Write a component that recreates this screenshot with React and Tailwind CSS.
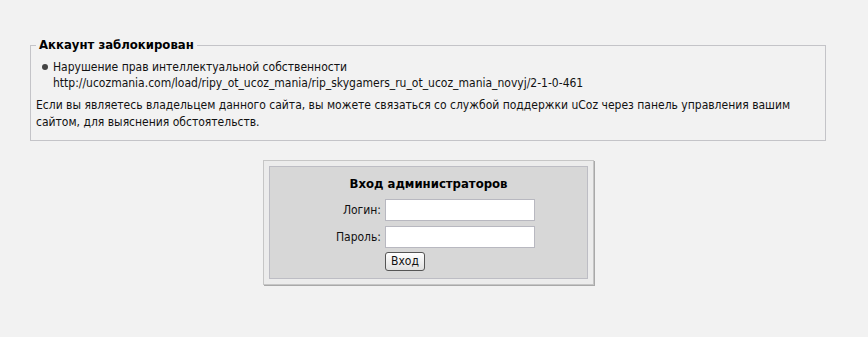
export default function App() {
  return (
    <div
      className="min-h-[337px] bg-[#f2f2f2] text-[12px] text-[#111] pt-[37px]"
      style={{ fontFamily: 'Tahoma, "DejaVu Sans Condensed", "DejaVu Sans", sans-serif' }}
    >
      {/* Блок о блокировке */}
      <fieldset className="mx-[30px] w-[796px] border border-[#c4c4c8] px-[5px] pb-[9px] pt-[4px] leading-[16px]">
        <legend className="px-[3px] font-bold text-[13px] text-black">Аккаунт заблокирован</legend>
        <ul className="mt-[2px] pl-[6px]">
          <li className="flex gap-[5px]">
            <span className="mt-[5px] w-[6px] h-[6px] rounded-full bg-[#444] shrink-0" />
            <div>
              <div>Нарушение прав интеллектуальной собственности</div>
              <div>http://ucozmania.com/load/ripy_ot_ucoz_mania/rip_skygamers_ru_ot_ucoz_mania_novyj/2-1-0-461</div>
            </div>
          </li>
        </ul>
        <p className="mt-[6px] leading-[17px]">
          Если вы являетесь владельцем данного сайта, вы можете связаться со службой поддержки uCoz через панель управления вашим сайтом, для выяснения обстоятельств.
        </p>
      </fieldset>

      {/* Вход администраторов */}
      <div className="flex justify-center mt-[19px] pr-[11px]">
        <div className="w-[331px] border border-[#c6c6c6] bg-[#ececec] p-[5px] shadow-[1px_1px_0_#a9a9a9]">
          <div className="border border-[#bdbdc4] bg-[#d7d7d7] pt-[9px] pb-[7px]">
            <div className="text-center font-bold text-[13px] text-black leading-[16px]">Вход администраторов</div>
            <div className="mt-[7px] flex flex-col gap-[5px]">
              <div className="flex items-center">
                <label className="w-[115px] text-right pr-[4px]">Логин:</label>
                <input className="w-[150px] h-[22px] border border-[#b8b8c0] bg-white" />
              </div>
              <div className="flex items-center">
                <label className="w-[115px] text-right pr-[4px]">Пароль:</label>
                <input type="password" className="w-[150px] h-[22px] border border-[#b8b8c0] bg-white" />
              </div>
              <div className="flex -mt-[1px]">
                <div className="w-[115px]" />
                <button className="h-[19px] px-[5px] border border-[#555] rounded-[3px] bg-gradient-to-b from-white to-[#e0e0e0] text-[12px] leading-[15px]">
                  Вход
                </button>
              </div>
            </div>
          </div>
        </div>
      </div>
    </div>
  );
}
